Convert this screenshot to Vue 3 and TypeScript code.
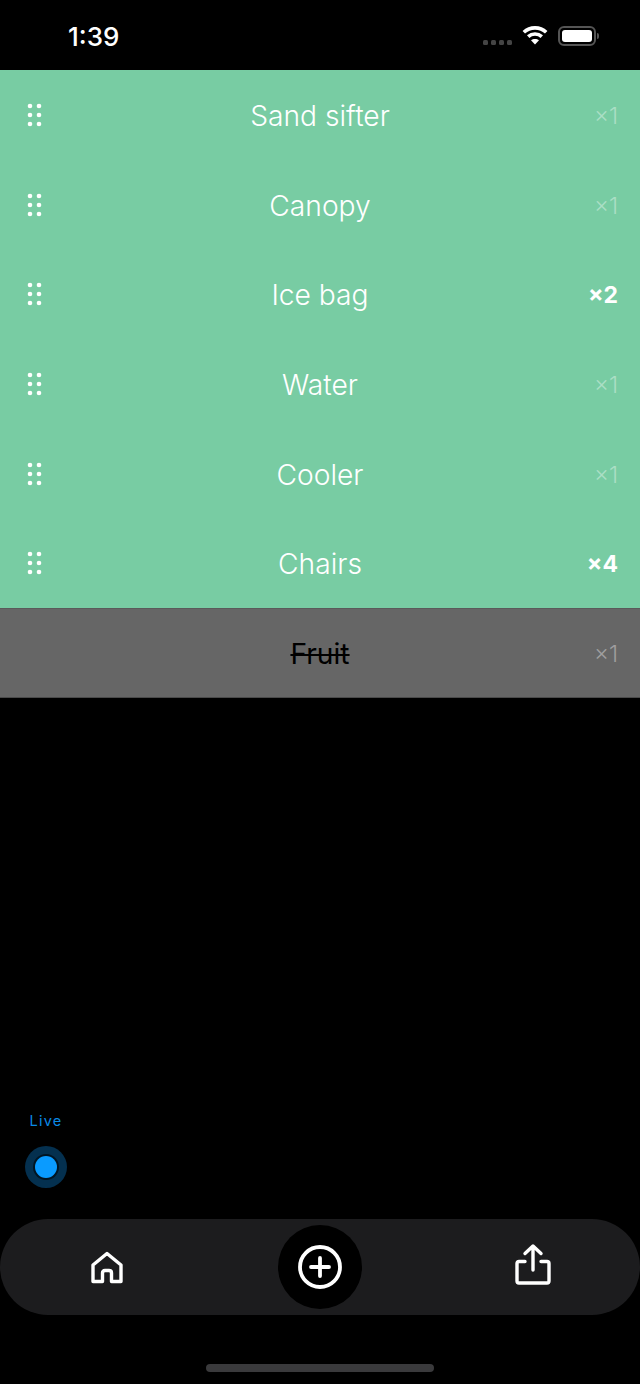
<script setup lang="ts">
interface Item { name: string; qty: number; done?: boolean }
const items: Item[] = [
  { name: 'Sand sifter', qty: 1 },
  { name: 'Canopy', qty: 1 },
  { name: 'Ice bag', qty: 2 },
  { name: 'Water', qty: 1 },
  { name: 'Cooler', qty: 1 },
  { name: 'Chairs', qty: 4 },
  { name: 'Fruit', qty: 1, done: true },
]
</script>

<template>
  <div class="screen">
    <header class="status">
      <span class="time">1:39</span>
      <div class="status-icons">
        <span class="signal"><i></i><i></i><i></i><i></i></span>
        <svg class="wifi" width="26" height="20" viewBox="0 0 26 20" fill="none" stroke="#fff" stroke-width="3.6">
          <path d="M1.800 7.200C8 1.400 18 1.400 24.200 7.200" />
          <path d="M6.200 11.600C10 8.200 16 8.200 19.800 11.600" />
          <path d="M13 19.500 L9 15.300C11.200 13.500 14.800 13.500 17 15.300Z" fill="#fff" stroke="none" />
        </svg>
        <span class="battery"><span class="battery-fill"></span></span>
        <span class="battery-cap"></span>
      </div>
    </header>

    <ul class="list">
      <li v-for="item in items" :key="item.name" class="row" :class="{ done: item.done }">
        <svg v-if="!item.done" class="grip" width="15" height="24" viewBox="0 0 15 24" fill="#fff">
          <circle cx="3" cy="3" r="2.300" />
          <circle cx="12" cy="3" r="2.300" />
          <circle cx="3" cy="12" r="2.300" />
          <circle cx="12" cy="12" r="2.300" />
          <circle cx="3" cy="21" r="2.300" />
          <circle cx="12" cy="21" r="2.300" />
        </svg>
        <span class="name">{{ item.name }}</span>
        <span class="qty" :class="{ many: item.qty > 1 }">×{{ item.qty }}</span>
      </li>
    </ul>

    <div class="live">
      <span class="live-label">Live</span>
      <span class="live-dot"><span class="live-core"></span></span>
    </div>

    <nav class="tabbar">
      <svg class="tab-icon" width="34" height="34" viewBox="0 0 34 34" fill="none" stroke="#fff" stroke-width="3.400" stroke-linejoin="round">
        <path d="M3 15 17 3.500 31 15V31.500H21.500V23Q21.500 20.500 19 20.500H15Q12.500 20.500 12.500 23V31.500H3Z" />
      </svg>
      <div class="add">
        <svg width="46" height="46" viewBox="0 0 46 46" fill="none" stroke="#fff" stroke-width="3.800" stroke-linecap="round">
          <circle cx="23" cy="23" r="20" />
          <path d="M23 14V32M14 23H32" />
        </svg>
      </div>
      <svg class="tab-icon share" width="38" height="44" viewBox="0 0 38 44" fill="none" stroke="#fff" stroke-width="3.400" stroke-linecap="round" stroke-linejoin="round">
        <path d="M19 27V4M11 10.500 19 3 27 10.500" />
        <path d="M11 18.500H5Q3 18.500 3 20.500V38Q3 40 5 40H33Q35 40 35 38V20.500Q35 18.500 33 18.500H27" />
      </svg>
    </nav>

    <div class="home-area"><span class="home-indicator"></span></div>
  </div>
</template>

<style>
html, body { margin: 0; background: #000; }
</style>

<style scoped>
.screen {
  width: 640px;
  height: 1384px;
  background: #000;
  display: flex;
  flex-direction: column;
  font-family: Inter, "Liberation Sans", sans-serif;
  color: #fff;
  overflow: hidden;
}
.status {
  height: 70px;
  flex: none;
  display: flex;
  align-items: center;
  justify-content: space-between;
  padding: 0 41px 0 68px;
}
.time { font-size: 26px; font-weight: 500; position: relative; top: 1px; }
.status-icons { display: flex; align-items: center; }
.signal { display: flex; gap: 3px; margin-right: 10px; margin-top: 15px; }
.signal i { width: 5px; height: 5px; border-radius: 1.5px; background: #444; }
.wifi { margin-right: 10px; margin-top: -1px; }
.battery {
  width: 38px;
  height: 20px;
  box-sizing: border-box;
  border: 2px solid #555;
  border-radius: 6px;
  padding: 2px;
  display: flex;
  margin-top: 2px;
}
.battery-fill { flex: 1; background: #fff; border-radius: 3px; }
.battery-cap { width: 2px; height: 6px; background: #555; border-radius: 0 2px 2px 0; margin-left: 1px; margin-top: 2px; }
.list { list-style: none; margin: 0; padding: 0; flex: none; }
.row {
  height: 89.7px;
  box-sizing: border-box;
  padding-top: 2px;
  background: #78cca3;
  position: relative;
  display: flex;
  align-items: center;
  justify-content: center;
}
.row.done {
  background: #666;
  border-top: 1px solid #5a5a5a;
  border-bottom: 1px solid #4a4a4a;
}
.name { font-size: 28.2px; font-weight: 300; }
.done .name { color: #000; font-weight: 400; text-decoration: line-through; }
.grip {
  position: absolute;
  left: 27px;
  top: 33px;
}
.qty {
  position: absolute;
  right: 22px;
  font-size: 23px;
  font-weight: 300;
  color: rgba(255, 255, 255, 0.38);
}
.qty.many { color: #fff; font-weight: 700; }
.live {
  margin-top: auto;
  margin-left: 25px;
  width: 42px;
  display: flex;
  flex-direction: column;
  align-items: center;
  gap: 17px;
}
.live-label { font-size: 14.5px; letter-spacing: 1.2px; color: #0a8ae6; white-space: nowrap; }
.live-dot {
  width: 42px;
  height: 42px;
  border-radius: 50%;
  background: #04304f;
  display: flex;
  align-items: center;
  justify-content: center;
}
.live-core {
  width: 22px;
  height: 22px;
  border-radius: 50%;
  background: #0a9bff;
  box-shadow: 0 0 0 2px #011523;
}
.tabbar {
  margin-top: 31px;
  height: 96px;
  flex: none;
  border-radius: 48px;
  background: #1c1c1e;
  display: grid;
  grid-template-columns: 214px 1fr 214px;
  align-items: center;
  justify-items: center;
}
.share { margin-top: -4px; }
.add {
  width: 84px;
  height: 84px;
  border-radius: 50%;
  background: #000;
  display: flex;
  align-items: center;
  justify-content: center;
}
.home-area { height: 69px; flex: none; display: flex; justify-content: center; padding-top: 49px; box-sizing: border-box; }
.home-indicator { width: 228px; height: 8px; border-radius: 4px; background: #3a3a3c; }
</style>
